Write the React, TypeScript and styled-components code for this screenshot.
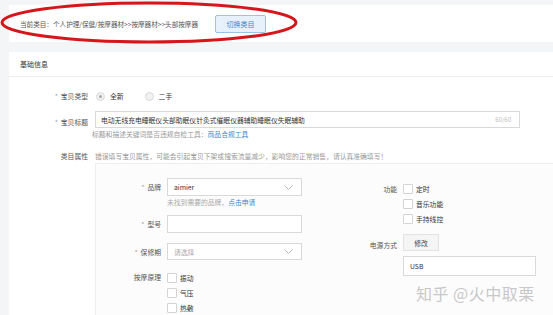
import styled, { createGlobalStyle } from 'styled-components';

const GlobalStyle = createGlobalStyle`
  html, body {
    margin: 0;
    padding: 0;
    background: #f4f5f7;
    overflow: hidden;
    font-family: "Noto Sans CJK SC", "Noto Sans", sans-serif;
  }
`;

const Page = styled.div`
  position: relative;
  width: 620px;
  padding: 5px 0 0 9px;
  box-sizing: border-box;
  display: flex;
  flex-direction: column;
  gap: 10px;
`;

const Card = styled.div`
  background: #fff;
  flex-shrink: 0;
`;

const CategoryBar = styled(Card)`
  height: 37px;
  display: flex;
  align-items: center;
  padding-left: 11px;
  font-size: 6.6px;
  color: #555;
`;

const SwitchBtn = styled.div`
  margin-left: 17px;
  width: 49px;
  height: 16px;
  display: flex;
  align-items: center;
  justify-content: center;
  border: 1px solid #9cc2e6;
  border-radius: 2px;
  background: #e6f1fb;
  color: #3a86cf;
  font-size: 7px;
`;

const Ring = styled.svg`
  position: absolute;
  left: 0;
  top: 0;
`;

const SectionHead = styled.div`
  height: 24px;
  display: flex;
  align-items: center;
  padding-left: 11px;
  font-size: 7px;
  color: #333;
  border-bottom: 1px solid #eceef1;
`;

const FormBody = styled.div`
  padding-top: 13px;
  display: grid;
  grid-template-columns: 79px 1fr;
  column-gap: 7px;
  font-size: 6.8px;
  color: #333;
`;

const Label = styled.div<{ $mt?: number }>`
  margin-top: ${(p) => p.$mt ?? 0}px;
  text-align: right;
  color: #555;
  line-height: 12px;
  white-space: nowrap;
`;

const Star = styled.span`
  color: #999;
  margin-right: 3px;
`;

const Cell = styled.div<{ $mt?: number }>`
  margin-top: ${(p) => p.$mt ?? 0}px;
  display: flex;
  align-items: center;
  min-height: 12px;
`;

const Radio = styled.span<{ $on?: boolean }>`
  width: 7px;
  height: 7px;
  border-radius: 50%;
  border: 1px solid #d8d8d8;
  background: #f2f2f2;
  margin: 0 5px 0 1px;
  display: flex;
  align-items: center;
  justify-content: center;
  &::after {
    content: '';
    width: 3px;
    height: 3px;
    border-radius: 50%;
    background: ${(p) => (p.$on ? '#aaa' : 'transparent')};
  }
`;

const RadioText = styled.span`
  margin-right: 20px;
`;

const TitleInput = styled.div`
  width: 425px;
  height: 17px;
  border: 1px solid #d9d9d9;
  box-sizing: border-box;
  display: flex;
  align-items: center;
  justify-content: space-between;
  padding: 0 8px 0 5px;
`;

const Counter = styled.span`
  color: #bbb;
  font-size: 6px;
`;

const Hint = styled.div<{ $mt?: number }>`
  margin-top: ${(p) => p.$mt ?? 0}px;
  color: #999;
  line-height: 10px;
  white-space: nowrap;
`;

const Link = styled.span`
  color: #3a86cf;
`;

const Panel = styled.div`
  grid-column: 2;
  margin-top: 1px;
  height: 200px;
  background: #fcfcfc;
  border: 1px solid #eceef1;
  padding-top: 14px;
  display: flex;
`;

const Column = styled.div<{ $labelW: number; $w: number }>`
  width: ${(p) => p.$w}px;
  display: grid;
  grid-template-columns: ${(p) => p.$labelW}px 1fr;
  column-gap: 6px;
  align-content: start;
`;

const Field = styled.div<{ $h?: number; $w?: number; $muted?: boolean }>`
  width: ${(p) => p.$w ?? 135}px;
  height: ${(p) => p.$h ?? 18}px;
  box-sizing: border-box;
  border: 1px solid #d9d9d9;
  background: #fff;
  display: flex;
  align-items: center;
  justify-content: space-between;
  padding: 0 8px 0 6px;
  color: ${(p) => (p.$muted ? '#aaa' : '#333')};
`;

const GrayBtn = styled.div`
  width: 36px;
  height: 17px;
  box-sizing: border-box;
  border: 1px solid #e3e3e3;
  background: #f5f5f5;
  display: flex;
  align-items: center;
  justify-content: center;
  color: #444;
`;

const CheckList = styled.div`
  display: flex;
  flex-direction: column;
  gap: 6px;
`;

const CheckRow = styled.div`
  display: flex;
  align-items: center;
  height: 9px;
`;

const Box = styled.span`
  width: 8px;
  height: 8px;
  border: 1px solid #d4d4d4;
  background: #fff;
  border-radius: 1px;
  margin-right: 3px;
`;

const Watermark = styled.div`
  position: absolute;
  left: 416px;
  top: 281px;
  font-size: 16px;
  color: #c8c8c8;
  letter-spacing: 0.5px;
  text-shadow: 0 0 1px #fff;
  white-space: nowrap;
`;

const Chevron = () => (
  <svg width="9" height="5" viewBox="0 0 9 5">
    <polyline points="0.5,0.5 4.5,4.5 8.5,0.5" fill="none" stroke="#aaa" strokeWidth="0.8" />
  </svg>
);

const Check = ({ text }: { text: string }) => (
  <CheckRow>
    <Box />
    <span>{text}</span>
  </CheckRow>
);

const App = () => {
  return (
    <>
      <GlobalStyle />
      <Page>
        <CategoryBar>
          当前类目：个人护理/保健/按摩器材&gt;&gt;按摩器材&gt;&gt;头部按摩器
          <SwitchBtn>切换类目</SwitchBtn>
        </CategoryBar>

        <Card>
          <SectionHead>基础信息</SectionHead>
          <FormBody>
            <Label>
              <Star>*</Star>宝贝类型
            </Label>
            <Cell>
              <Radio $on />
              <RadioText>全新</RadioText>
              <Radio />
              <RadioText>二手</RadioText>
            </Cell>

            <Label $mt={14}>
              <Star>*</Star>宝贝标题
            </Label>
            <Cell $mt={9}>
              <TitleInput>
                <span>电动无线充电睡眠仪头部助眠仪针灸式催眠仪器辅助睡眠仪失眠辅助</span>
                <Counter>60/60</Counter>
              </TitleInput>
            </Cell>
            <div />
            <Hint $mt={1} style={{ marginLeft: -3 }}>
              标题和描述关键词是否违规自检工具：<Link>商品合规工具</Link>
            </Hint>

            <Label $mt={11}>类目属性</Label>
            <Hint $mt={12}>
              错误填写宝贝属性，可能会引起宝贝下架或搜索流量减少，影响您的正常销售，请认真准确填写！
            </Hint>

            <Panel>
              <Column $labelW={65} $w={208}>
                <Label $mt={3}>
                  <Star>*</Star>品牌
                </Label>
                <Field>
                  aimier
                  <Chevron />
                </Field>
                <div />
                <Hint style={{ marginTop: 1, color: '#aaa' }}>
                  未找到需要的品牌，<Link>点击申请</Link>
                </Hint>

                <Label $mt={11}>
                  <Star>*</Star>型号
                </Label>
                <Field style={{ marginTop: 8 }} />

                <Label $mt={13}>
                  <Star>*</Star>保修期
                </Label>
                <Field $muted $h={17} style={{ marginTop: 10 }}>
                  请选择
                  <Chevron />
                </Field>

                <Label $mt={11}>按摩原理</Label>
                <CheckList style={{ marginTop: 13 }}>
                  <Check text="振动" />
                  <Check text="气压" />
                  <Check text="热敷" />
                </CheckList>
              </Column>

              <Column $labelW={93} $w={250}>
                <Label $mt={5}>功能</Label>
                <CheckList style={{ marginTop: 6 }}>
                  <Check text="定时" />
                  <Check text="音乐功能" />
                  <Check text="手持线控" />
                </CheckList>

                <Label $mt={16}>电源方式</Label>
                <div style={{ marginTop: 11 }}>
                  <GrayBtn>修改</GrayBtn>
                </div>
                <div />
                <Field $w={133} $h={20} style={{ marginTop: 5 }}>
                  USB
                </Field>
              </Column>
            </Panel>
          </FormBody>
        </Card>

        <Ring width="302" height="48" viewBox="0 0 302 48">
          <ellipse cx="149" cy="22.5" rx="147" ry="19.5" fill="none" stroke="#d5171c" strokeWidth="3" />
        </Ring>
        <Watermark>知乎 @火中取栗</Watermark>
      </Page>
    </>
  );
};

export default App;
